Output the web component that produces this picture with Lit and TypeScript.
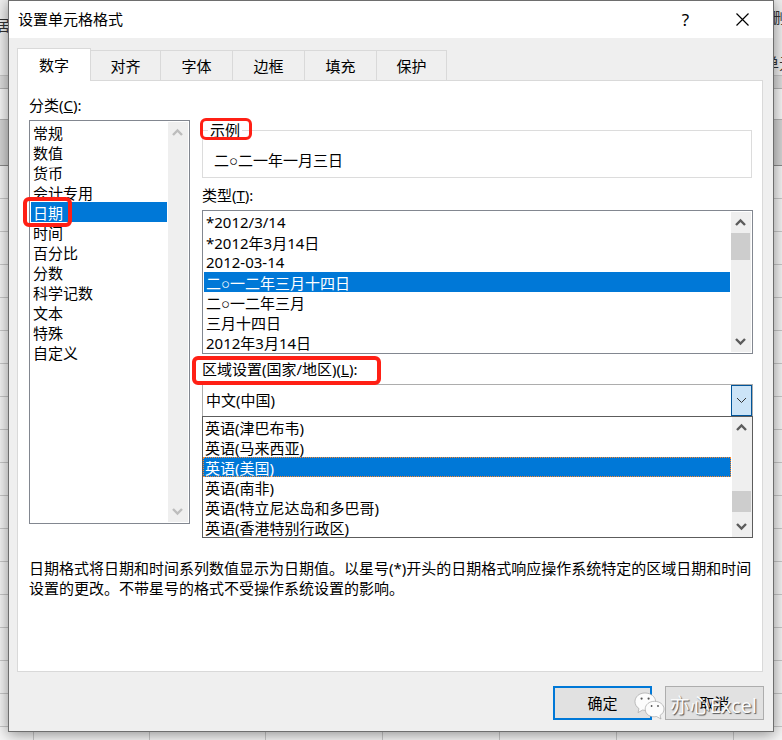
import { LitElement, html, css, svg } from "lit";
import { customElement, property } from "lit/decorators.js";
import { classMap } from "lit/directives/class-map.js";

const TABS = ["数字", "对齐", "字体", "边框", "填充", "保护"];

const CATEGORIES = [
  "常规", "数值", "货币", "会计专用", "日期", "时间",
  "百分比", "分数", "科学记数", "文本", "特殊", "自定义",
];

const TYPES = [
  "*2012/3/14",
  "*2012年3月14日",
  "2012-03-14",
  "二○一二年三月十四日",
  "二○一二年三月",
  "三月十四日",
  "2012年3月14日",
];

const LOCALES = [
  "英语(津巴布韦)",
  "英语(马来西亚)",
  "英语(美国)",
  "英语(南非)",
  "英语(特立尼达岛和多巴哥)",
  "英语(香港特别行政区)",
];

const COLUMN_LINES = [33, 149, 265, 382, 499, 616, 733];

/** Scroll bar track with two arrows and an optional thumb. */
@customElement("scroll-track")
export class ScrollTrack extends LitElement {
  @property({ type: Number }) start = 0;
  @property({ type: Number }) size = 0;
  @property({ type: Boolean }) disabled = false;

  static styles = css`
    :host {
      display: flex;
      flex-direction: column;
      justify-content: space-between;
      position: relative;
      flex: 0 0 20px;
      background: #efefef;
      color: #5c5c5c;
    }
    :host([disabled]) {
      color: #bdbdbd;
    }
    .arrow {
      display: block;
      width: 19px;
      height: 21px;
    }
    .thumb {
      position: absolute;
      left: 0;
      width: 19px;
      background: #cdcdcd;
    }
  `;

  render() {
    return html`
      <svg class="arrow" viewBox="0 0 19 21" fill="none" stroke="currentColor" stroke-width="2.4">
        <path d="M5 13 9.5 8.5 14 13" />
      </svg>
      ${this.size
        ? html`<div class="thumb" style="top:${this.start}px;height:${this.size}px"></div>`
        : ""}
      <svg class="arrow" viewBox="0 0 19 21" fill="none" stroke="currentColor" stroke-width="2.4">
        <path d="M5 8 9.5 12.5 14 8" />
      </svg>
    `;
  }
}

@customElement("app-root")
export class AppRoot extends LitElement {
  static styles = css`
    :host {
      display: flex;
      position: relative;
      box-sizing: border-box;
      min-height: 100vh;
      padding: 0 8px 8px;
      overflow: hidden;
      background: #f4f4f4;
      color: #000;
      font: 15px/20px "Noto Sans", "Liberation Sans", "Noto Sans CJK SC", sans-serif;
    }
    *,
    *::before {
      box-sizing: border-box;
    }
    button,
    select {
      margin: 0;
      padding: 0;
      border: 0;
      border-radius: 0;
      background: none;
      color: inherit;
      font: inherit;
      outline: 0;
    }

    /* Spreadsheet behind the dialog */
    .sheet {
      position: absolute;
      inset: 0;
      display: flex;
      flex-direction: column;
      overflow: hidden;
      color: #333;
      white-space: nowrap;
    }
    .ribbon {
      flex: 0 0 76px;
      background: #f0f0f0;
      border-bottom: 1px solid #c8c8c8;
    }
    .bar {
      flex: 0 0 13px;
      background: #dedede;
      border-bottom: 1px solid #b4b4b4;
    }
    .formula {
      flex: 0 0 31px;
      background: #f8f8f8;
      border-bottom: 1px solid #b4b4b4;
    }
    .heads {
      flex: 0 0 46px;
      background: #d6d6d6;
      border-bottom: 1px solid #8c8c8c;
    }
    .grid {
      flex: 1;
      position: relative;
      background: repeating-linear-gradient(#f6f6f6 0 32px, #c9c9c9 32px 33px);
    }
    .rule {
      position: absolute;
      top: 0;
      bottom: 0;
      width: 1px;
      background: #c9c9c9;
    }
    .peek {
      position: absolute;
    }
    .peek.left {
      top: 15px;
      left: -5px;
    }
    .peek.first {
      top: 7px;
      left: calc(100% - 12px);
    }
    .peek.second {
      top: 53px;
      left: calc(100% - 18px);
    }

    /* Dialog frame */
    .dialog {
      position: relative;
      flex: 1;
      min-width: 0;
      display: flex;
      flex-direction: column;
      background: #efefef;
      border: 1px solid #6e6e6e;
      box-shadow: 0 2px 14px rgba(0, 0, 0, 0.45);
    }
    .titlebar {
      display: flex;
      align-items: center;
      height: 37px;
      padding: 0 2px 0 9px;
      background: #fff;
    }
    .title {
      flex: 1;
      margin: 0;
      font: inherit;
      line-height: 18px;
      padding-bottom: 2px;
    }
    .tool {
      width: 57px;
      height: 37px;
      font-size: 17px;
    }
    .tool svg {
      display: block;
      margin: auto;
    }
    .tabs {
      display: flex;
      align-items: flex-end;
      padding: 10px 8px 0;
    }
    .tab {
      width: 72px;
      height: 30px;
      border: 1px solid #d9d9d9;
      border-width: 1px 1px 0 0;
    }
    .tab.active + .tab,
    .tab:last-child {
      width: 70px;
    }
    .tab.active {
      position: relative;
      width: 74px;
      height: 33px;
      margin-bottom: -1px;
      border-left-width: 1px;
      background: #fff;
    }
    .panel {
      flex: 1;
      margin: 0 10px 0 8px;
      padding: 15px 9px 70px 11px;
      background: #fff;
      border: 1px solid #d9d9d9;
    }
    .columns {
      display: flex;
      gap: 12px;
    }
    .side {
      flex: 0 0 161px;
    }
    .main {
      flex: 1;
      min-width: 0;
      padding-top: 27px;
    }
    .label {
      display: block;
      margin-bottom: 6px;
      width: max-content;
      line-height: 18px;
    }
    .marked {
      position: relative;
    }
    .marked::before {
      content: "";
      position: absolute;
      border: 4px solid #ff2015;
      border-radius: 6px;
      pointer-events: none;
      z-index: 2;
    }

    /* Lists */
    .listbox {
      display: flex;
      padding: 1px;
      background: #fff;
      border: 1px solid #828790;
    }
    .listbox.marked::before {
      left: -7px;
      top: 76px;
      width: 49px;
      height: 30px;
    }
    .list {
      flex: 1;
      min-width: 0;
      overflow: hidden;
      appearance: none;
      margin-right: 1px;
      scrollbar-width: none;
    }
    .list option {
      height: 20px;
      min-height: 20px;
      padding: 0 2px;
      line-height: 18px;
    }
    .list option:checked {
      background: #0078d7 linear-gradient(#0078d7, #0078d7);
      color: #fff;
    }
    .tall {
      height: 400px;
    }
    .short {
      height: 140px;
    }

    /* Sample */
    .sample {
      position: relative;
      min-width: 0;
      height: 55px;
      margin: 0 1px 8px 0;
      padding: 13px 11px 0;
      border: 1px solid #dcdcdc;
    }
    .sample::before {
      left: -3px;
      top: -19px;
      width: 52px;
      height: 22px;
      border-width: 3px;
    }
    .legend {
      height: 14px;
      margin-left: -6px;
      padding: 0 2px;
      overflow: hidden;
      line-height: 14px;
    }
    .value {
      display: block;
    }

    /* Locale drop-down */
    .region {
      margin-top: 6px;
    }
    .region::before {
      left: -10px;
      top: -4px;
      width: 189px;
      height: 29px;
    }
    .combo {
      position: relative;
      display: flex;
      height: 33px;
      border: 1px solid #adadad;
    }
    .choice {
      flex: 1;
      min-width: 0;
      padding: 0 0 2px 3px;
      appearance: none;
    }
    .drop {
      display: flex;
      align-items: center;
      justify-content: center;
      width: 21px;
      height: 31px;
      background: #cce4f7;
      border: 1px solid #005499;
    }
    .popup {
      position: absolute;
      left: -1px;
      right: -1px;
      top: 31px;
      display: flex;
      height: 122px;
      background: #fff;
      border: 1px solid #5c5c5c;
      z-index: 1;
    }
    .popup option:checked {
      outline: 1px dotted #ff8728;
      outline-offset: -1px;
    }

    .note {
      margin: 34px 0 0;
    }
    .footer {
      display: flex;
      justify-content: flex-end;
      gap: 13px;
      padding: 14px 9px 11px;
    }
    .action {
      width: 99px;
      height: 34px;
      background: #e1e1e1;
      border: 1px solid #adadad;
    }
    .action.primary {
      border: 2px solid #0078d7;
    }

    .brand {
      position: absolute;
      right: 16px;
      bottom: 9px;
      display: flex;
      align-items: center;
      gap: 4px;
      color: #fafafa;
      font-size: 20px;
      line-height: 32px;
      text-shadow: 1px 1px 1px #555;
      pointer-events: none;
    }
  `;

  private list(id: string, items: string[], selected: number, size: string, label = "") {
    return html`<select class="list ${size}" id=${id} size=${items.length} aria-label=${label || id}>
      ${items.map((t, i) => html`<option ?selected=${i === selected}>${t}</option>`)}
    </select>`;
  }

  private logo() {
    return svg`<svg width="32" height="28" viewBox="0 0 32 28" stroke="#999" stroke-width=".6">
      <path fill="#fcfcfc" d="M11 1C5 1 1 5 1 9.6c0 2.9 1.500 5.300 4 7l-1 4 4.600-2.600c6 1.500 13-2 13-8.400C21.600 5 17 1 11 1Z" />
      <path fill="#fcfcfc" d="M20.500 9.300c-5.300 0-9.300 3.400-9.300 7.700 0 5.700 5.500 8.800 11.300 7.500l4.500 2.500-1-3.600c2.400-1.400 4-3.700 4-6.400 0-4.300-4.200-7.700-9.500-7.700Z" />
      <g fill="#555" stroke="none">
        <circle cx="7.600" cy="6.600" r="1.100" /><circle cx="14.600" cy="6.600" r="1.100" />
        <circle cx="17.600" cy="14" r=".9" /><circle cx="24" cy="14" r=".9" />
      </g>
    </svg>`;
  }

  render() {
    return html`
      <div class="sheet" aria-hidden="true">
        <div class="ribbon"></div>
        <div class="bar"></div>
        <div class="formula"></div>
        <div class="heads"></div>
        <div class="grid">
          ${COLUMN_LINES.map((x) => html`<div class="rule" style="left:${x}px"></div>`)}
        </div>
        <span class="peek left">居</span>
        <span class="peek first">删</span>
        <span class="peek second">单元</span>
      </div>

      <section class="dialog" role="dialog" aria-labelledby="title">
        <header class="titlebar">
          <h1 class="title" id="title">设置单元格格式</h1>
          <button class="tool" aria-label="帮助">?</button>
          <button class="tool" aria-label="关闭">
            <svg width="13" height="13" viewBox="0 0 13 13" stroke="#000" stroke-width="1.200">
              <path d="M.5.5l12 12M12.500.5l-12 12" />
            </svg>
          </button>
        </header>

        <nav class="tabs" role="tablist">
          ${TABS.map(
            (t, i) => html`<button
              class=${classMap({ tab: true, active: i === 0 })}
              role="tab"
              aria-selected=${i === 0}
            >${t}</button>`
          )}
        </nav>

        <main class="panel">
          <div class="columns">
            <div class="side">
              <label class="label" for="category">分类(<u>C</u>):</label>
              <div class="listbox marked">
                ${this.list("category", CATEGORIES, 4, "tall", "分类")}
                <scroll-track disabled></scroll-track>
              </div>
            </div>
            <div class="main">
              <fieldset class="sample marked">
                <legend class="legend">示例</legend>
                <output class="value">二○二一年一月三日</output>
              </fieldset>
              <label class="label" for="type">类型(<u>T</u>):</label>
              <div class="listbox">
                ${this.list("type", TYPES, 3, "short", "类型")}
                <scroll-track start="21" size="27"></scroll-track>
              </div>
              <label class="label region marked" for="locale">区域设置(国家/地区)(<u>L</u>):</label>
              <div class="combo">
                <select class="choice" id="locale">
                  <option>中文(中国)</option>
                </select>
                <button class="drop" aria-label="展开">
                  <svg width="11" height="7" viewBox="0 0 11 7" fill="none" stroke="#333">
                    <path d="M1 1l4.500 4.500L10 1" />
                  </svg>
                </button>
                <div class="popup">
                  ${this.list("locales", LOCALES, 2, "", "区域设置")}
                  <scroll-track start="74" size="21"></scroll-track>
                </div>
              </div>
            </div>
          </div>
          <p class="note">日期格式将日期和时间系列数值显示为日期值。以星号(*)开头的日期格式响应操作系统特定的区域日期和时间设置的更改。不带星号的格式不受操作系统设置的影响。</p>
        </main>

        <footer class="footer">
          <button class="action primary">确定</button>
          <button class="action">取消</button>
        </footer>
        <div class="brand">${this.logo()}<span>亦心Excel</span></div>
      </section>
    `;
  }
}
